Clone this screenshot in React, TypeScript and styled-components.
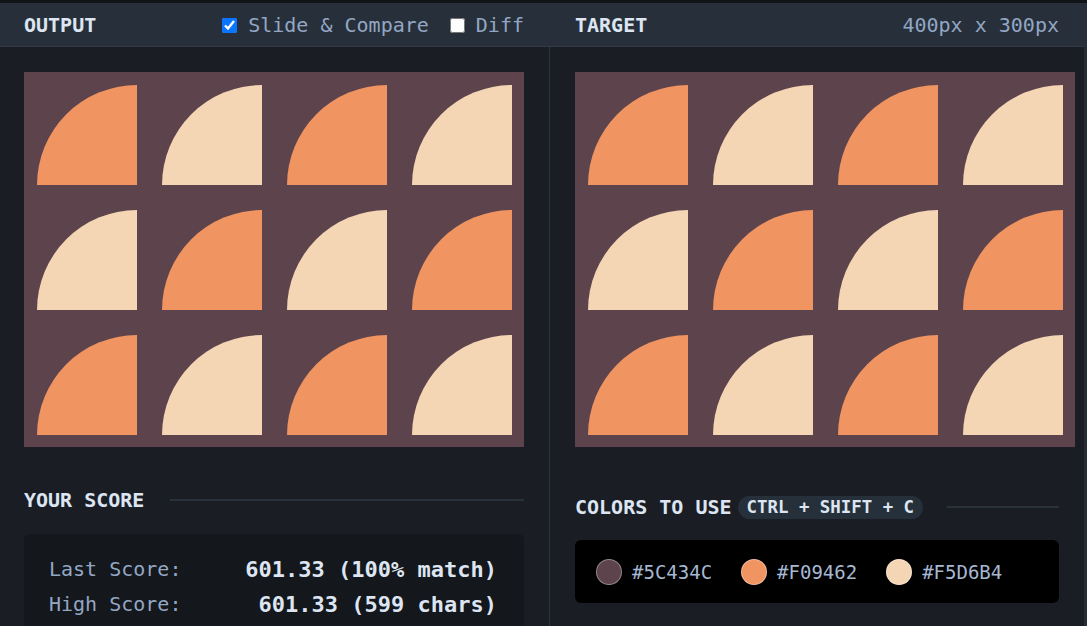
import React from "react";
import styled, { createGlobalStyle } from "styled-components";

const GlobalStyle = createGlobalStyle`
  html, body { margin: 0; padding: 0; background: #1a1e24; }
  body { font-family: "DejaVu Sans Mono", "Liberation Mono", monospace; overflow: hidden; }
  * { box-sizing: border-box; }
`;

const Page = styled.div`
  width: 1087px;
  height: 626px;
  border-top: 3px solid #101317;
  display: grid;
  grid-template-columns: 549px 535px 3px;
  background: #1a1e24;
  overflow: hidden;
`;

const Panel = styled.section`
  display: flex;
  flex-direction: column;
  min-width: 0;
`;

const Header = styled.header<{ $left: number }>`
  height: 44px;
  background: #27303a;
  border-bottom: 1px solid #313a45;
  display: flex;
  align-items: center;
  justify-content: space-between;
  padding: 1px 25px 0 ${(p) => p.$left}px;
  flex-shrink: 0;
`;

const Title = styled.h2`
  margin: 0;
  font-size: 20px;
  font-weight: 700;
  color: #dde5f2;
  line-height: 24px;
`;

const Controls = styled.div`
  display: flex;
  align-items: center;
`;

const CheckLabel = styled.label<{ $gapAfter?: number }>`
  display: flex;
  align-items: center;
  gap: 11px;
  font-size: 20px;
  color: #93a7c4;
  margin-right: ${(p) => p.$gapAfter ?? 0}px;
`;

const Check = styled.input`
  width: 15px;
  height: 15px;
  margin: 0;
  accent-color: #0a75ff;
`;

const Dim = styled.span`
  font-size: 20px;
  color: #93a7c4;
`;

const Body = styled.div<{ $divider?: boolean }>`
  flex: 1;
  padding: 25px 25px 0 ${(p) => (p.$divider ? 25 : 24)}px;
  border-left: ${(p) => (p.$divider ? "1px solid #2c343e" : "none")};
  display: flex;
  flex-direction: column;
  min-width: 0;
`;

const Canvas = styled.div`
  width: 500px;
  height: 375px;
  flex-shrink: 0;
  background: #5c434c;
  display: grid;
  grid-template-columns: repeat(4, 125px);
  grid-template-rows: repeat(3, 125px);
  place-items: center;
`;

const Quarter = styled.div<{ $c: string }>`
  width: 100px;
  height: 100px;
  background: ${(p) => p.$c};
  border-top-left-radius: 100%;
`;

const SectionRow = styled.div<{ $top: number }>`
  display: flex;
  align-items: center;
  margin-top: ${(p) => p.$top}px;
  height: 24px;
`;

const Rule = styled.div<{ $gap: number }>`
  flex: 1;
  height: 2px;
  background: #29313b;
  margin-left: ${(p) => p.$gap}px;
`;

const Pill = styled.span`
  margin-left: 6px;
  height: 23px;
  padding: 0 9px;
  border-radius: 12px;
  background: #26303a;
  color: #dde5f2;
  font-size: 17.4px;
  font-weight: 700;
  display: flex;
  align-items: center;
`;

const ScoreBox = styled.div`
  margin-top: 22px;
  background: #14171b;
  border-radius: 6px;
  padding: 23px 27px 20px 25px;
  display: grid;
  grid-template-columns: auto 1fr;
  row-gap: 10px;
`;

const ScoreLabel = styled.span`
  font-size: 20px;
  color: #93a7c4;
  line-height: 25px;
`;

const ScoreValue = styled.span`
  font-size: 22px;
  font-weight: 700;
  color: #dde5f2;
  justify-self: end;
  line-height: 25px;
`;

const ColorsBox = styled.div`
  margin-top: 21px;
  height: 63px;
  background: #000;
  border-radius: 6px;
  display: flex;
  align-items: center;
  padding-left: 21px;
  gap: 29px;
`;

const Swatch = styled.div`
  display: flex;
  align-items: center;
  gap: 10px;
`;

const Dot = styled.span<{ $c: string }>`
  width: 26px;
  height: 26px;
  border-radius: 50%;
  background: ${(p) => p.$c};
  border: 1px solid rgba(255, 255, 255, 0.35);
`;

const Hex = styled.span`
  font-size: 19px;
  color: #a6b8d2;
`;

const EdgeStrip = styled.div`
  background: #262d36;
  border-top: 44px solid #27303a;
`;

const ORANGE = "#F09462";
const CREAM = "#F5D6B4";

const cells = Array.from({ length: 12 }, (_, i) => {
  const r = Math.floor(i / 4);
  const c = i % 4;
  return (r + c) % 2 === 0 ? ORANGE : CREAM;
});

const Board = () => (
  <Canvas>
    {cells.map((c, i) => (
      <Quarter key={i} $c={c} />
    ))}
  </Canvas>
);

export default function App() {
  return (
    <>
      <GlobalStyle />
      <Page>
        <Panel>
          <Header $left={24}>
            <Title>OUTPUT</Title>
            <Controls>
              <CheckLabel $gapAfter={21}>
                <Check type="checkbox" defaultChecked />
                Slide &amp; Compare
              </CheckLabel>
              <CheckLabel>
                <Check type="checkbox" />
                Diff
              </CheckLabel>
            </Controls>
          </Header>
          <Body>
            <Board />
            <SectionRow $top={41}>
              <Title>YOUR SCORE</Title>
              <Rule $gap={26} />
            </SectionRow>
            <ScoreBox>
              <ScoreLabel>Last Score:</ScoreLabel>
              <ScoreValue>601.33 (100% match)</ScoreValue>
              <ScoreLabel>High Score:</ScoreLabel>
              <ScoreValue>601.33 (599 chars)</ScoreValue>
            </ScoreBox>
          </Body>
        </Panel>
        <Panel>
          <Header $left={26}>
            <Title>TARGET</Title>
            <Dim>400px x 300px</Dim>
          </Header>
          <Body $divider>
            <Board />
            <SectionRow $top={48}>
              <Title>COLORS TO USE</Title>
              <Pill>CTRL + SHIFT + C</Pill>
              <Rule $gap={24} />
            </SectionRow>
            <ColorsBox>
              <Swatch>
                <Dot $c="#5C434C" />
                <Hex>#5C434C</Hex>
              </Swatch>
              <Swatch>
                <Dot $c="#F09462" />
                <Hex>#F09462</Hex>
              </Swatch>
              <Swatch>
                <Dot $c="#F5D6B4" />
                <Hex>#F5D6B4</Hex>
              </Swatch>
            </ColorsBox>
          </Body>
        </Panel>
        <EdgeStrip />
      </Page>
    </>
  );
}
